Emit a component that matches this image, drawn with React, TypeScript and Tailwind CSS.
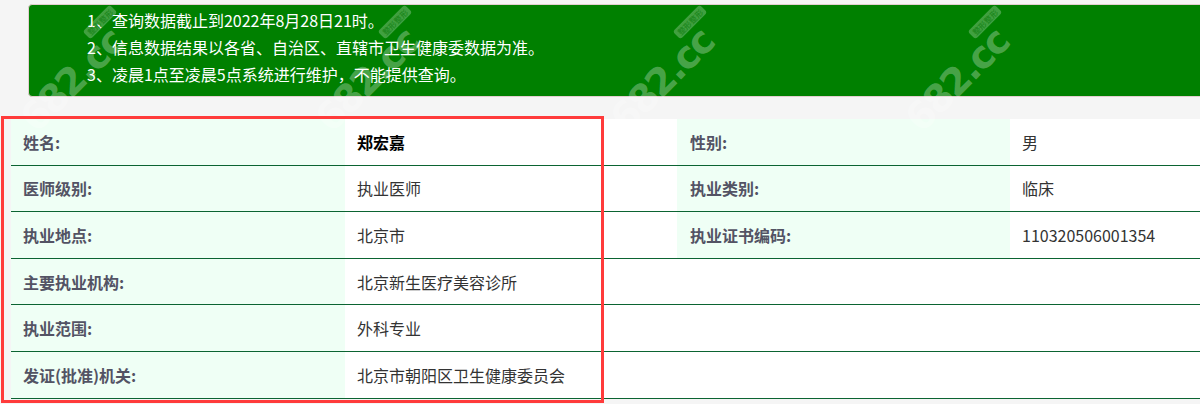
const font = "font-['Microsoft_YaHei','Noto_Sans_CJK_SC','Noto_Sans',sans-serif]";

const notes = [
  "1、查询数据截止到2022年8月28日21时。",
  "2、信息数据结果以各省、自治区、直辖市卫生健康委数据为准。",
  "3、凌晨1点至凌晨5点系统进行维护，不能提供查询。",
];

type Row = { label: string; value: string; label2?: string; value2?: string; strong?: boolean };

const rows: Row[] = [
  { label: "姓名:", value: "郑宏嘉", label2: "性别:", value2: "男", strong: true },
  { label: "医师级别:", value: "执业医师", label2: "执业类别:", value2: "临床" },
  { label: "执业地点:", value: "北京市", label2: "执业证书编码:", value2: "110320506001354" },
  { label: "主要执业机构:", value: "北京新生医疗美容诊所" },
  { label: "执业范围:", value: "外科专业" },
  { label: "发证(批准)机关:", value: "北京市朝阳区卫生健康委员会" },
];

// watermark centres
const marks = [78, 373, 668, 963];

function Watermark({ x }: { x: number }) {
  return (
    <>
      <div
        className="pointer-events-none absolute top-[80px] -translate-x-1/2 -translate-y-1/2 -rotate-45 whitespace-nowrap font-['DejaVu_Sans',sans-serif] text-[38px] font-bold leading-none tracking-[-2px] text-white/30"
        style={{ left: x - 6 }}
      >
        682.cc
      </div>
      <div
        className="pointer-events-none absolute top-[22px] -translate-x-1/2 -translate-y-1/2 -rotate-45 whitespace-nowrap rounded-[3px] bg-white/25 px-[3px] text-[8px] font-bold leading-[11px] text-[#0a7a0a]/60"
        style={{ left: x + 22 }}
      >
        整形整形
      </div>
    </>
  );
}

export default function App() {
  return (
    <div className={`relative h-[404px] w-[1200px] overflow-hidden bg-[#f5f5f5] ${font}`}>
      <div className="pl-[28px] pt-[4px]">
        <div className="h-[93px] w-[1200px] rounded-l-[4px] border border-[#e3cfcf] bg-[#008000] pl-[58px] pt-[2px] text-[16px] leading-[27px] text-white">
          {notes.map((note) => (
            <p key={note}>{note}</p>
          ))}
        </div>
      </div>

      <div className="ml-[11px] mt-[22px] w-[1332px] bg-white text-[16px] text-[#333]">
        {rows.map((row) => (
          <div
            key={row.label}
            className="grid h-[46.6px] grid-cols-[334px_332px_333px_333px] items-center border-b border-[#0b6432]"
          >
            <div className="flex h-full items-center bg-[#effff5] pl-[12px] font-bold text-[#535364]">
              {row.label}
            </div>
            <div className={`pl-[12px] ${row.strong ? "font-bold text-black" : ""}`}>
              {row.value}
            </div>
            {row.label2 ? (
              <div className="flex h-full items-center bg-[#effff5] pl-[13px] font-bold text-[#535364]">
                {row.label2}
              </div>
            ) : (
              <div />
            )}
            <div className="pl-[12px]">{row.value2}</div>
          </div>
        ))}
      </div>

      {marks.map((x) => (
        <Watermark key={x} x={x} />
      ))}

      <div className="pointer-events-none absolute left-[1px] top-[116px] h-[287px] w-[603px] border-[3px] border-[#ff3b3b]" />
    </div>
  );
}
